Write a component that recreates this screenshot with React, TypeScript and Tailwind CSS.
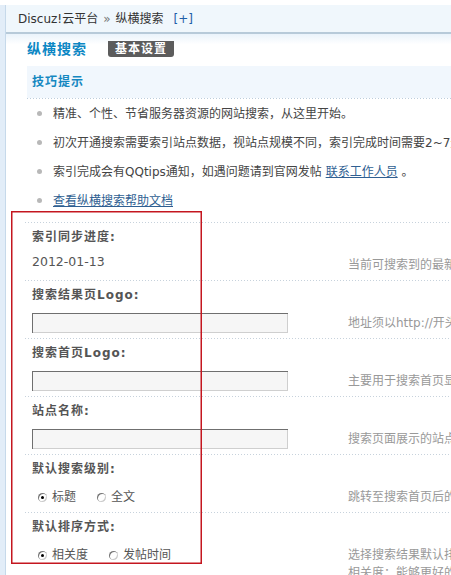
import React from 'react';

const font = "font-['Tahoma','DejaVu_Sans','Noto_Sans_CJK_SC',sans-serif]";

function Radio({ checked, label }: { checked?: boolean; label: string }) {
  return (
    <span className="inline-flex items-center mr-[21px]">
      <span className="w-[9px] h-[9px] rounded-full bg-white shadow-[inset_1px_1px_0_#777,inset_-1px_-1px_0_#ccc] flex items-center justify-center">
        {checked && <span className="w-[3px] h-[3px] rounded-full bg-black" />}
      </span>
      <span className="ml-[5px] text-[#555]">{label}</span>
    </span>
  );
}

function Dotted() {
  return <div className="h-px bg-[repeating-linear-gradient(to_right,#c7d2dc_0_1px,transparent_1px_3px)]" />;
}

function Section({ label, hint, children }: { label: string; hint: React.ReactNode; children: React.ReactNode }) {
  return (
    <div>
      <Dotted />
      <div className="h-[28px] leading-[28px] pl-[7px] font-bold tracking-[1px] text-[#555]">{label}</div>
      <div className="h-[29px] flex">
        <div className="w-[323px] shrink-0 pl-[7px]">{children}</div>
        <div className="pt-[5px] leading-[18px] text-[#999] whitespace-nowrap">{hint}</div>
      </div>
    </div>
  );
}

function Input() {
  return (
    <div className="mt-[4px] w-[256px] h-[20px] bg-[#f6f6f6] shadow-[inset_1px_1px_0_#6f6f6f,inset_-1px_-1px_0_#cfcfcf]" />
  );
}

export default function App() {
  const tips: React.ReactNode[] = [
    '精准、个性、节省服务器资源的网站搜索，从这里开始。',
    '初次开通搜索需要索引站点数据，视站点规模不同，索引完成时间需要2~7天。',
    <>
      索引完成会有QQtips通知，如遇问题请到官网发帖{' '}
      <a className="text-[#2f5f92] underline">联系工作人员</a> 。
    </>,
    <a className="text-[#2f5f92] underline">查看纵横搜索帮助文档</a>,
  ];

  return (
    <div className={`relative w-[451px] h-[575px] overflow-hidden bg-white flex text-[12px] ${font}`}>
      {/* left frame strip */}
      <div className="w-[6px] shrink-0 mt-[5px] bg-[#e2edf8] shadow-[inset_-1px_0_0_#c6d9ea]" />

      <div className="flex-1 min-w-0 flex flex-col">
        {/* breadcrumb */}
        <div className="mt-[5px] h-[29px] bg-[#f0f7fc] shadow-[inset_0_-2px_0_#b7cad9] flex items-center pl-[12px] pb-[2px] whitespace-nowrap text-[#333]">
          <span>Discuz!云平台</span>
          <span className="mx-[5px] text-[#777]">»</span>
          <span>纵横搜索</span>
          <span className="ml-[10px] text-[#1f5fa8]">[+]</span>
        </div>

        {/* title + tab */}
        <div className="h-[26px] bg-gradient-to-b from-[#eaf3fb] to-white to-40% flex items-start pt-[7px] pl-[21px]">
          <span className="text-[14px] leading-[16px] font-bold tracking-[1px] text-[#0c87c4]">纵横搜索</span>
          <span className="ml-[21px] h-[16px] leading-[16px] px-[7px] bg-[#5c5c5c] rounded-b-[3px] text-white font-bold tracking-[1px]">
            基本设置
          </span>
        </div>

        {/* tips */}
        <div className="ml-[21px] mt-[6px]">
          <div className="h-[32px] bg-[#f1f7fd] pl-[5px] flex items-center">
            <span className="font-bold tracking-[1px] text-[#1588c1]">技巧提示</span>
          </div>
          <div className="h-px bg-[repeating-linear-gradient(to_right,#bccddc_0_1px,transparent_1px_3px)]" />
        </div>
        <ul>
          {tips.map((t, i) => (
            <li key={i} className="h-[29px] flex items-center whitespace-nowrap text-[#444]">
              <span className="ml-[31px] w-[5px] h-[5px] rounded-full bg-[#b8b8b8] shrink-0" />
              <span className="ml-[11px]">{t}</span>
            </li>
          ))}
        </ul>

        {/* form */}
        <div className="ml-[19px] mt-[7px]">
          <Section label="索引同步进度:" hint="当前可搜索到的最新数据的时间">
            <div className="leading-[22px] text-[12.5px] text-[#555] font-['DejaVu_Sans',sans-serif]">2012-01-13</div>
          </Section>
          <Section label="搜索结果页Logo:" hint="地址须以http://开头，留空则使用默认Logo">
            <Input />
          </Section>
          <Section label="搜索首页Logo:" hint="主要用于搜索首页显示的Logo">
            <Input />
          </Section>
          <Section label="站点名称:" hint="搜索页面展示的站点名称">
            <Input />
          </Section>
          <Section label="默认搜索级别:" hint="跳转至搜索首页后的默认搜索级别">
            <div className="h-[28px] flex items-center pl-[6px]">
              <Radio checked label="标题" />
              <Radio label="全文" />
            </div>
          </Section>
          <Section
            label="默认排序方式:"
            hint={
              <>
                选择搜索结果默认排序方式
                <br />
                相关度：能够更好的展示与关键词相关的帖子
              </>
            }
          >
            <div className="h-[28px] flex items-center pl-[6px]">
              <Radio checked label="相关度" />
              <Radio label="发帖时间" />
            </div>
          </Section>
        </div>
      </div>

      {/* red annotation frame */}
      <div className="absolute left-[11px] top-[211px] w-[191px] h-[353px] shadow-[inset_0_0_0_1.5px_#c4161f]" />
    </div>
  );
}
